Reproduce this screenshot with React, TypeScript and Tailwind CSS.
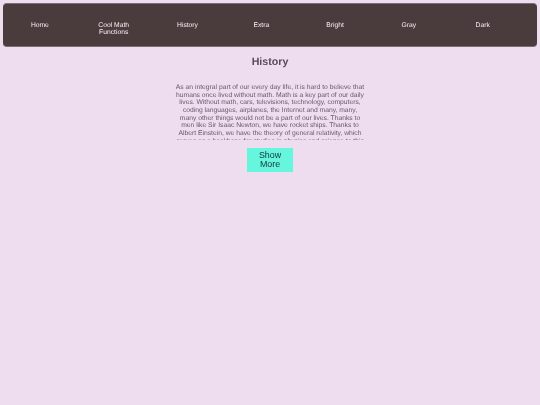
export default function App() {
  const items = ["Home", "Cool Math Functions", "History", "Extra", "Bright", "Gray", "Dark"];
  return (
    <div className="min-h-[405px] bg-[#eedcef] pt-[3px] font-['Liberation_Sans',sans-serif] blur-[0.25px] [text-rendering:geometricPrecision]">
      <nav className="mx-[3px] flex h-[44px] items-start rounded-[4px] border-y border-[#7d6b76] bg-[#4a3c3c] pt-[17.5px]">
        {items.map((t) => (
          <div key={t} className="flex w-[73.8px] shrink-0 justify-center px-[14px] text-center text-[6.74px] leading-[7.67px] text-[#f6eef6]">
            <span>{t}</span>
          </div>
        ))}
      </nav>
      <main className="flex flex-col items-center">
        <h1 className="mt-[9px] text-[10.67px] leading-[13px] font-bold text-[#584b5b]">History</h1>
        <p className="mt-[15px] h-[56px] w-[190px] overflow-hidden text-center text-[6.74px] leading-[7.67px] text-[#67596c]">
          As an integral part of our every day life, it is hard to believe that humans once lived without math. Math is a key part of our daily lives. Without math, cars, televisions, technology, computers, coding languages, airplanes, the Internet and many, many, many other things would not be a part of our lives. Thanks to men like Sir Isaac Newton, we have rocket ships. Thanks to Albert Einstein, we have the theory of general relativity, which serves as a backbone for studies in physics and science to this
        </p>
        <button className="mt-[8px] h-[24px] w-[46px] bg-[#66f5dd] px-[6px] text-center text-[8.89px] leading-[9.33px] text-[#14343b]">
          Show More
        </button>
      </main>
    </div>
  );
}
